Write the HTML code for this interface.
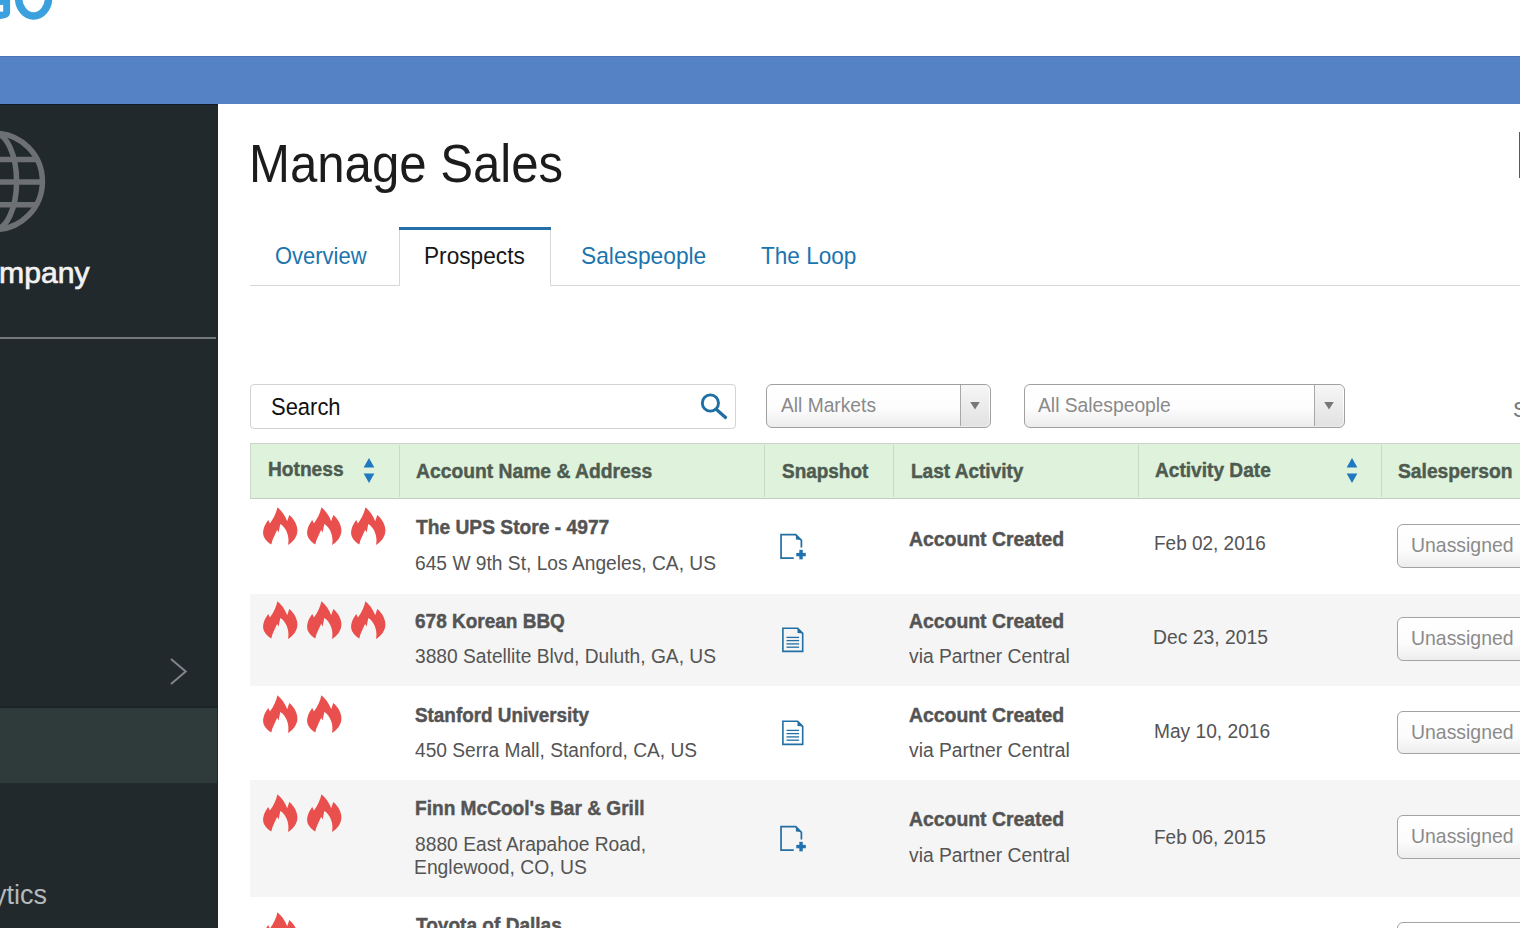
<!DOCTYPE html>
<html><head><meta charset="utf-8"><title>Manage Sales</title>
<style>
html,body{margin:0;padding:0;}
body{width:1520px;height:928px;overflow:hidden;position:relative;background:#fff;font-family:"Liberation Sans", sans-serif;}
</style></head><body>
<svg style="position:absolute;left:0px;top:0px;overflow:visible;" width="60" height="25" viewBox="0 0 60 25"><path d="M-2,0 H10.1 V13 Q9.6,16.5 6,17.8 Q3,18.8 -2,19.2 Z" fill="#3aa0de"/><rect x="-2" y="4.9" width="5.2" height="6.7" fill="#fff"/><ellipse cx="33.6" cy="-2.2" rx="15" ry="18.2" fill="none" stroke="#3aa0de" stroke-width="7.5"/></svg>
<div style="position:absolute;left:0px;top:56px;width:1520px;height:48px;background:#5581c5;"></div>
<div style="position:absolute;left:0px;top:56px;width:1520px;height:1px;background:#4d74b4;"></div>
<div style="position:absolute;left:0px;top:104px;width:217.7px;height:824px;background:#22292d;"></div>
<div style="position:absolute;left:0px;top:104px;width:217.7px;height:1.3px;background:#0f1c2c;"></div>
<svg style="position:absolute;left:0px;top:104px;overflow:visible;" width="218" height="200" viewBox="0 0 218 200"><defs><clipPath id="gc"><circle cx="-5.8" cy="77.4" r="50"/></clipPath></defs><g fill="none" stroke="#6e7173" stroke-width="5.5"><circle cx="-5.8" cy="77.4" r="48.2"/><g clip-path="url(#gc)"><ellipse cx="-5.8" cy="77.4" rx="22.4" ry="48.2"/><line x1="-60" y1="55.5" x2="60" y2="55.5"/><line x1="-60" y1="78" x2="60" y2="78"/><line x1="-60" y1="100.7" x2="60" y2="100.7"/></g></g></svg>
<div style="position:absolute;right:1430.40px;top:258.00px;font-size:30.2px;line-height:30.2px;font-weight:normal;color:#f2f2f2;letter-spacing:0px;white-space:nowrap;-webkit-text-stroke:0.7px #f2f2f2;">Company</div>
<div style="position:absolute;left:0px;top:336.5px;width:216px;height:2px;background:#747a7c;"></div>
<svg style="position:absolute;left:160px;top:650px;overflow:visible;" width="40" height="45" viewBox="0 0 40 45"><polyline points="11,9 25.7,21.5 11,34" fill="none" stroke="#80868a" stroke-width="2"/></svg>
<div style="position:absolute;left:0px;top:705.6px;width:217.7px;height:2.4px;background:#1c2427;"></div>
<div style="position:absolute;left:0px;top:708px;width:216.6px;height:74.5px;background:#2f3a3b;"></div>
<div style="position:absolute;right:1473.10px;top:882.00px;font-size:27px;line-height:27px;font-weight:normal;color:#b4b8bb;letter-spacing:0px;white-space:nowrap;">Analytics</div>
<div style="position:absolute;left:248.96px;top:136.00px;font-size:54px;line-height:54px;font-weight:normal;color:#1c1c1c;letter-spacing:0px;white-space:nowrap;transform:scaleX(0.9100);transform-origin:left top;">Manage Sales</div>
<div style="position:absolute;left:250px;top:284.6px;width:1270px;height:1.6px;background:#d6d6d6;"></div>
<div style="position:absolute;left:398.6px;top:227.2px;width:152.2px;height:59.2px;background:#fff;border-left:1px solid #d8d8d8;border-right:1px solid #d8d8d8;box-sizing:border-box;"></div>
<div style="position:absolute;left:398.6px;top:227.2px;width:152.2px;height:3px;background:#246fa8;"></div>
<div style="position:absolute;left:274.70px;top:244.00px;font-size:23.8px;line-height:23.8px;font-weight:normal;color:#1b74ae;letter-spacing:0px;white-space:nowrap;transform:scaleX(0.9230);transform-origin:left top;">Overview</div>
<div style="position:absolute;left:424.25px;top:244.00px;font-size:23.8px;line-height:23.8px;font-weight:normal;color:#161616;letter-spacing:0px;white-space:nowrap;transform:scaleX(0.9524);transform-origin:left top;">Prospects</div>
<div style="position:absolute;left:580.74px;top:244.00px;font-size:23.8px;line-height:23.8px;font-weight:normal;color:#1b74ae;letter-spacing:0px;white-space:nowrap;transform:scaleX(0.9562);transform-origin:left top;">Salespeople</div>
<div style="position:absolute;left:761.00px;top:244.00px;font-size:23.8px;line-height:23.8px;font-weight:normal;color:#1b74ae;letter-spacing:0px;white-space:nowrap;transform:scaleX(0.9480);transform-origin:left top;">The Loop</div>
<div style="position:absolute;left:1519px;top:132px;width:1px;height:46px;background:#2b6e78;"></div>
<div style="position:absolute;left:250.3px;top:383.8px;width:485.3px;height:45.5px;border:1.5px solid #d3d3d3;border-radius:4px;box-sizing:border-box;background:#fff;"></div>
<div style="position:absolute;left:270.70px;top:395.00px;font-size:24.3px;line-height:24.3px;font-weight:normal;color:#111;letter-spacing:0px;white-space:nowrap;transform:scaleX(0.9039);transform-origin:left top;">Search</div>
<svg style="position:absolute;left:695px;top:388px;overflow:visible;" width="40" height="40" viewBox="0 0 40 40"><circle cx="15.4" cy="15" r="8.1" fill="none" stroke="#1f6fa3" stroke-width="2.9"/><line x1="21.5" y1="21.5" x2="30.5" y2="29.5" stroke="#1f6fa3" stroke-width="3.2" stroke-linecap="round"/></svg>
<div style="position:absolute;left:766px;top:383.7px;width:224.60000000000002px;height:44.1px;border:1.5px solid #a0a0a0;border-radius:6px;box-sizing:border-box;background:linear-gradient(#ffffff 0%,#fdfdfd 55%,#ececec 100%);"></div>
<div style="position:absolute;left:959.8px;top:385.2px;width:29.300000000000068px;height:41.2px;background:linear-gradient(#f6f6f6,#e2e2e2);border-radius:0 5px 5px 0;"></div>
<div style="position:absolute;left:959.8px;top:385.2px;width:1.2px;height:41.2px;background:#a8a8a8;"></div>
<svg style="position:absolute;left:969.2px;top:400px;overflow:visible;" width="12" height="12" viewBox="0 0 12 12"><polygon points="1.25,2 10.75,2 6,9.4" fill="#777"/></svg>
<div style="position:absolute;left:780.50px;top:396.00px;font-size:19.9px;line-height:19.9px;font-weight:normal;color:#8a8a8a;letter-spacing:0px;white-space:nowrap;transform:scaleX(0.9657);transform-origin:left top;">All Markets</div>
<div style="position:absolute;left:1023.9px;top:383.7px;width:320.9px;height:44.1px;border:1.5px solid #a0a0a0;border-radius:6px;box-sizing:border-box;background:linear-gradient(#ffffff 0%,#fdfdfd 55%,#ececec 100%);"></div>
<div style="position:absolute;left:1313.6px;top:385.2px;width:29.700000000000045px;height:41.2px;background:linear-gradient(#f6f6f6,#e2e2e2);border-radius:0 5px 5px 0;"></div>
<div style="position:absolute;left:1313.6px;top:385.2px;width:1.2px;height:41.2px;background:#a8a8a8;"></div>
<svg style="position:absolute;left:1323.1999999999998px;top:400px;overflow:visible;" width="12" height="12" viewBox="0 0 12 12"><polygon points="1.25,2 10.75,2 6,9.4" fill="#777"/></svg>
<div style="position:absolute;left:1037.60px;top:396.00px;font-size:19.9px;line-height:19.9px;font-weight:normal;color:#8a8a8a;letter-spacing:0px;white-space:nowrap;transform:scaleX(0.9686);transform-origin:left top;">All Salespeople</div>
<div style="position:absolute;left:1513.00px;top:399.00px;font-size:21.8px;line-height:21.8px;font-weight:normal;color:#777;letter-spacing:0px;white-space:nowrap;">Show</div>
<div style="position:absolute;left:250.4px;top:443.3px;width:1270px;height:55.6px;background:#dff2dc;border-top:1.5px solid #cdd3cb;border-bottom:1.6px solid #c6ccc4;border-left:1.5px solid #cdd6cb;box-sizing:border-box;"></div>
<div style="position:absolute;left:398.6px;top:445px;width:1.2px;height:52px;background:#cbdac8;"></div>
<div style="position:absolute;left:763.6px;top:445px;width:1.2px;height:52px;background:#cbdac8;"></div>
<div style="position:absolute;left:892.8px;top:445px;width:1.2px;height:52px;background:#cbdac8;"></div>
<div style="position:absolute;left:1138.2px;top:445px;width:1.2px;height:52px;background:#cbdac8;"></div>
<div style="position:absolute;left:1381.2px;top:445px;width:1.2px;height:52px;background:#cbdac8;"></div>
<div style="position:absolute;left:268.40px;top:459.00px;font-size:20.6px;line-height:20.6px;font-weight:bold;color:#4e5b50;letter-spacing:0px;white-space:nowrap;transform:scaleX(0.9296);transform-origin:left top;-webkit-text-stroke:0.45px #4e5b50;">Hotness</div>
<div style="position:absolute;left:415.70px;top:461.00px;font-size:20.6px;line-height:20.6px;font-weight:bold;color:#4e5b50;letter-spacing:0px;white-space:nowrap;transform:scaleX(0.9369);transform-origin:left top;-webkit-text-stroke:0.45px #4e5b50;">Account Name &amp; Address</div>
<div style="position:absolute;left:781.60px;top:461.00px;font-size:20.6px;line-height:20.6px;font-weight:bold;color:#4e5b50;letter-spacing:0px;white-space:nowrap;transform:scaleX(0.9200);transform-origin:left top;-webkit-text-stroke:0.45px #4e5b50;">Snapshot</div>
<div style="position:absolute;left:911.00px;top:461.00px;font-size:20.6px;line-height:20.6px;font-weight:bold;color:#4e5b50;letter-spacing:0px;white-space:nowrap;transform:scaleX(0.9238);transform-origin:left top;-webkit-text-stroke:0.45px #4e5b50;">Last Activity</div>
<div style="position:absolute;left:1155.10px;top:460.00px;font-size:20.6px;line-height:20.6px;font-weight:bold;color:#4e5b50;letter-spacing:0px;white-space:nowrap;transform:scaleX(0.9280);transform-origin:left top;-webkit-text-stroke:0.45px #4e5b50;">Activity Date</div>
<div style="position:absolute;left:1398.20px;top:461.00px;font-size:20.6px;line-height:20.6px;font-weight:bold;color:#4e5b50;letter-spacing:0px;white-space:nowrap;transform:scaleX(0.9352);transform-origin:left top;-webkit-text-stroke:0.45px #4e5b50;">Salesperson</div>
<svg style="position:absolute;left:363.1px;top:456px;overflow:visible;" width="12" height="30" viewBox="0 0 12 30"><polygon points="0.65,11.6 11.35,11.6 6,2.1" fill="#1f78c1"/><polygon points="0.65,17.5 11.35,17.5 6,27" fill="#1f78c1"/></svg>
<svg style="position:absolute;left:1346px;top:456px;overflow:visible;" width="12" height="30" viewBox="0 0 12 30"><polygon points="0.65,11.6 11.35,11.6 6,2.1" fill="#1f78c1"/><polygon points="0.65,17.5 11.35,17.5 6,27" fill="#1f78c1"/></svg>
<div style="position:absolute;left:250px;top:499.5px;width:1270px;height:94.29999999999995px;background:#fff;"></div>
<div style="position:absolute;left:250px;top:593.8px;width:1270px;height:92.40000000000009px;background:#f5f5f5;"></div>
<div style="position:absolute;left:250px;top:686.2px;width:1270px;height:93.69999999999993px;background:#fff;"></div>
<div style="position:absolute;left:250px;top:779.9px;width:1270px;height:117.60000000000002px;background:#f5f5f5;"></div>
<div style="position:absolute;left:250px;top:897.5px;width:1270px;height:30.5px;background:#fff;"></div>
<svg style="position:absolute;left:258.0px;top:501.90000000000003px;overflow:visible;" width="44" height="48" viewBox="0 0 44 48"><path d="M19.4,5.2 C22.8,8 26.8,12.5 29.2,19.3 L31.3,12.9 C36.2,17 39.6,23 39.4,29 C39.1,35 35,40 30,43 C31.8,35 28.5,25.5 22.3,21.9 L20.6,30.6 L19.2,27.8 C17,33 14.2,37.5 13.3,42.6 C9,39.6 5.1,36 5.1,31 C5.1,26 7.8,21 10.3,17.9 L11.9,21.6 C15.5,16.5 18.5,10.5 19.4,5.2 Z" fill="#e94f4d"/></svg>
<svg style="position:absolute;left:301.5px;top:501.90000000000003px;overflow:visible;" width="44" height="48" viewBox="0 0 44 48"><path d="M19.4,5.2 C22.8,8 26.8,12.5 29.2,19.3 L31.3,12.9 C36.2,17 39.6,23 39.4,29 C39.1,35 35,40 30,43 C31.8,35 28.5,25.5 22.3,21.9 L20.6,30.6 L19.2,27.8 C17,33 14.2,37.5 13.3,42.6 C9,39.6 5.1,36 5.1,31 C5.1,26 7.8,21 10.3,17.9 L11.9,21.6 C15.5,16.5 18.5,10.5 19.4,5.2 Z" fill="#e94f4d"/></svg>
<svg style="position:absolute;left:346.3px;top:501.90000000000003px;overflow:visible;" width="44" height="48" viewBox="0 0 44 48"><path d="M19.4,5.2 C22.8,8 26.8,12.5 29.2,19.3 L31.3,12.9 C36.2,17 39.6,23 39.4,29 C39.1,35 35,40 30,43 C31.8,35 28.5,25.5 22.3,21.9 L20.6,30.6 L19.2,27.8 C17,33 14.2,37.5 13.3,42.6 C9,39.6 5.1,36 5.1,31 C5.1,26 7.8,21 10.3,17.9 L11.9,21.6 C15.5,16.5 18.5,10.5 19.4,5.2 Z" fill="#e94f4d"/></svg>
<svg style="position:absolute;left:258.0px;top:595.8px;overflow:visible;" width="44" height="48" viewBox="0 0 44 48"><path d="M19.4,5.2 C22.8,8 26.8,12.5 29.2,19.3 L31.3,12.9 C36.2,17 39.6,23 39.4,29 C39.1,35 35,40 30,43 C31.8,35 28.5,25.5 22.3,21.9 L20.6,30.6 L19.2,27.8 C17,33 14.2,37.5 13.3,42.6 C9,39.6 5.1,36 5.1,31 C5.1,26 7.8,21 10.3,17.9 L11.9,21.6 C15.5,16.5 18.5,10.5 19.4,5.2 Z" fill="#e94f4d"/></svg>
<svg style="position:absolute;left:301.5px;top:595.8px;overflow:visible;" width="44" height="48" viewBox="0 0 44 48"><path d="M19.4,5.2 C22.8,8 26.8,12.5 29.2,19.3 L31.3,12.9 C36.2,17 39.6,23 39.4,29 C39.1,35 35,40 30,43 C31.8,35 28.5,25.5 22.3,21.9 L20.6,30.6 L19.2,27.8 C17,33 14.2,37.5 13.3,42.6 C9,39.6 5.1,36 5.1,31 C5.1,26 7.8,21 10.3,17.9 L11.9,21.6 C15.5,16.5 18.5,10.5 19.4,5.2 Z" fill="#e94f4d"/></svg>
<svg style="position:absolute;left:346.3px;top:595.8px;overflow:visible;" width="44" height="48" viewBox="0 0 44 48"><path d="M19.4,5.2 C22.8,8 26.8,12.5 29.2,19.3 L31.3,12.9 C36.2,17 39.6,23 39.4,29 C39.1,35 35,40 30,43 C31.8,35 28.5,25.5 22.3,21.9 L20.6,30.6 L19.2,27.8 C17,33 14.2,37.5 13.3,42.6 C9,39.6 5.1,36 5.1,31 C5.1,26 7.8,21 10.3,17.9 L11.9,21.6 C15.5,16.5 18.5,10.5 19.4,5.2 Z" fill="#e94f4d"/></svg>
<svg style="position:absolute;left:258.0px;top:689.5px;overflow:visible;" width="44" height="48" viewBox="0 0 44 48"><path d="M19.4,5.2 C22.8,8 26.8,12.5 29.2,19.3 L31.3,12.9 C36.2,17 39.6,23 39.4,29 C39.1,35 35,40 30,43 C31.8,35 28.5,25.5 22.3,21.9 L20.6,30.6 L19.2,27.8 C17,33 14.2,37.5 13.3,42.6 C9,39.6 5.1,36 5.1,31 C5.1,26 7.8,21 10.3,17.9 L11.9,21.6 C15.5,16.5 18.5,10.5 19.4,5.2 Z" fill="#e94f4d"/></svg>
<svg style="position:absolute;left:301.5px;top:689.5px;overflow:visible;" width="44" height="48" viewBox="0 0 44 48"><path d="M19.4,5.2 C22.8,8 26.8,12.5 29.2,19.3 L31.3,12.9 C36.2,17 39.6,23 39.4,29 C39.1,35 35,40 30,43 C31.8,35 28.5,25.5 22.3,21.9 L20.6,30.6 L19.2,27.8 C17,33 14.2,37.5 13.3,42.6 C9,39.6 5.1,36 5.1,31 C5.1,26 7.8,21 10.3,17.9 L11.9,21.6 C15.5,16.5 18.5,10.5 19.4,5.2 Z" fill="#e94f4d"/></svg>
<svg style="position:absolute;left:258.0px;top:789.3px;overflow:visible;" width="44" height="48" viewBox="0 0 44 48"><path d="M19.4,5.2 C22.8,8 26.8,12.5 29.2,19.3 L31.3,12.9 C36.2,17 39.6,23 39.4,29 C39.1,35 35,40 30,43 C31.8,35 28.5,25.5 22.3,21.9 L20.6,30.6 L19.2,27.8 C17,33 14.2,37.5 13.3,42.6 C9,39.6 5.1,36 5.1,31 C5.1,26 7.8,21 10.3,17.9 L11.9,21.6 C15.5,16.5 18.5,10.5 19.4,5.2 Z" fill="#e94f4d"/></svg>
<svg style="position:absolute;left:301.5px;top:789.3px;overflow:visible;" width="44" height="48" viewBox="0 0 44 48"><path d="M19.4,5.2 C22.8,8 26.8,12.5 29.2,19.3 L31.3,12.9 C36.2,17 39.6,23 39.4,29 C39.1,35 35,40 30,43 C31.8,35 28.5,25.5 22.3,21.9 L20.6,30.6 L19.2,27.8 C17,33 14.2,37.5 13.3,42.6 C9,39.6 5.1,36 5.1,31 C5.1,26 7.8,21 10.3,17.9 L11.9,21.6 C15.5,16.5 18.5,10.5 19.4,5.2 Z" fill="#e94f4d"/></svg>
<svg style="position:absolute;left:258.0px;top:907.1999999999999px;overflow:visible;" width="44" height="48" viewBox="0 0 44 48"><path d="M19.4,5.2 C22.8,8 26.8,12.5 29.2,19.3 L31.3,12.9 C36.2,17 39.6,23 39.4,29 C39.1,35 35,40 30,43 C31.8,35 28.5,25.5 22.3,21.9 L20.6,30.6 L19.2,27.8 C17,33 14.2,37.5 13.3,42.6 C9,39.6 5.1,36 5.1,31 C5.1,26 7.8,21 10.3,17.9 L11.9,21.6 C15.5,16.5 18.5,10.5 19.4,5.2 Z" fill="#e94f4d"/></svg>
<div style="position:absolute;left:416.06px;top:517.00px;font-size:20.1px;line-height:20.1px;font-weight:bold;color:#545454;letter-spacing:0px;white-space:nowrap;transform:scaleX(0.9562);transform-origin:left top;-webkit-text-stroke:0.45px #545454;">The UPS Store - 4977</div>
<div style="position:absolute;left:415.10px;top:553.00px;font-size:20.0px;line-height:20.0px;font-weight:normal;color:#545454;letter-spacing:0px;white-space:nowrap;transform:scaleX(0.9602);transform-origin:left top;">645 W 9th St, Los Angeles, CA, US</div>
<div style="position:absolute;left:415.10px;top:611.00px;font-size:20.1px;line-height:20.1px;font-weight:bold;color:#545454;letter-spacing:0px;white-space:nowrap;transform:scaleX(0.9453);transform-origin:left top;-webkit-text-stroke:0.45px #545454;">678 Korean BBQ</div>
<div style="position:absolute;left:415.10px;top:646.00px;font-size:20.0px;line-height:20.0px;font-weight:normal;color:#545454;letter-spacing:0px;white-space:nowrap;transform:scaleX(0.9602);transform-origin:left top;">3880 Satellite Blvd, Duluth, GA, US</div>
<div style="position:absolute;left:415.10px;top:705.00px;font-size:20.1px;line-height:20.1px;font-weight:bold;color:#545454;letter-spacing:0px;white-space:nowrap;transform:scaleX(0.9392);transform-origin:left top;-webkit-text-stroke:0.45px #545454;">Stanford University</div>
<div style="position:absolute;left:415.10px;top:740.00px;font-size:20.0px;line-height:20.0px;font-weight:normal;color:#545454;letter-spacing:0px;white-space:nowrap;transform:scaleX(0.9576);transform-origin:left top;">450 Serra Mall, Stanford, CA, US</div>
<div style="position:absolute;left:415.10px;top:798.00px;font-size:20.1px;line-height:20.1px;font-weight:bold;color:#545454;letter-spacing:0px;white-space:nowrap;transform:scaleX(0.9506);transform-origin:left top;-webkit-text-stroke:0.45px #545454;">Finn McCool's Bar &amp; Grill</div>
<div style="position:absolute;left:415.10px;top:834.00px;font-size:20.0px;line-height:20.0px;font-weight:normal;color:#545454;letter-spacing:0px;white-space:nowrap;transform:scaleX(0.9619);transform-origin:left top;">8880 East Arapahoe Road,</div>
<div style="position:absolute;left:414.13px;top:857.00px;font-size:20.0px;line-height:20.0px;font-weight:normal;color:#545454;letter-spacing:0px;white-space:nowrap;transform:scaleX(0.9657);transform-origin:left top;">Englewood, CO, US</div>
<div style="position:absolute;left:415.75px;top:915.00px;font-size:20.1px;line-height:20.1px;font-weight:bold;color:#545454;letter-spacing:0px;white-space:nowrap;transform:scaleX(0.9484);transform-origin:left top;-webkit-text-stroke:0.45px #545454;">Toyota of Dallas</div>
<svg style="position:absolute;left:770px;top:525px;overflow:visible;" width="50" height="45" viewBox="0 0 50 45"><path d="M23.76,33.1 H11.05 V9.58 H25.7 L31.4,15.3 V22.55" fill="none" stroke="#236ea3" stroke-width="1.7" stroke-linejoin="miter"/><polygon points="25.9,9.4 31.6,15.1 25.9,14.6" fill="#236ea3"/><rect x="26.29" y="27.88" width="9.5" height="3.4" fill="#1f72ad"/><rect x="29.34" y="24.83" width="3.4" height="9.5" fill="#1f72ad"/></svg>
<svg style="position:absolute;left:770px;top:618px;overflow:visible;" width="50" height="45" viewBox="0 0 50 45"><path d="M12.9,10.3 H27.6 L32.7,15.4 V33.4 H12.9 Z" fill="none" stroke="#236ea3" stroke-width="1.6"/><polygon points="27.5,9.8 33.3,15.6 27.5,15" fill="#236ea3"/><g stroke="#236ea3" stroke-width="1.3"><line x1="16.5" y1="19.4" x2="29.1" y2="19.4"/><line x1="16.5" y1="22.6" x2="29.1" y2="22.6"/><line x1="16.5" y1="25.9" x2="29.1" y2="25.9"/><line x1="16.5" y1="29.2" x2="29.1" y2="29.2"/></g></svg>
<svg style="position:absolute;left:769.6px;top:711.2px;overflow:visible;" width="50" height="45" viewBox="0 0 50 45"><path d="M12.9,10.3 H27.6 L32.7,15.4 V33.4 H12.9 Z" fill="none" stroke="#236ea3" stroke-width="1.6"/><polygon points="27.5,9.8 33.3,15.6 27.5,15" fill="#236ea3"/><g stroke="#236ea3" stroke-width="1.3"><line x1="16.5" y1="19.4" x2="29.1" y2="19.4"/><line x1="16.5" y1="22.6" x2="29.1" y2="22.6"/><line x1="16.5" y1="25.9" x2="29.1" y2="25.9"/><line x1="16.5" y1="29.2" x2="29.1" y2="29.2"/></g></svg>
<svg style="position:absolute;left:770px;top:816.5px;overflow:visible;" width="50" height="45" viewBox="0 0 50 45"><path d="M23.76,33.1 H11.05 V9.58 H25.7 L31.4,15.3 V22.55" fill="none" stroke="#236ea3" stroke-width="1.7" stroke-linejoin="miter"/><polygon points="25.9,9.4 31.6,15.1 25.9,14.6" fill="#236ea3"/><rect x="26.29" y="27.88" width="9.5" height="3.4" fill="#1f72ad"/><rect x="29.34" y="24.83" width="3.4" height="9.5" fill="#1f72ad"/></svg>
<div style="position:absolute;left:908.70px;top:529.00px;font-size:20.1px;line-height:20.1px;font-weight:bold;color:#545454;letter-spacing:0px;white-space:nowrap;transform:scaleX(0.9646);transform-origin:left top;-webkit-text-stroke:0.45px #545454;">Account Created</div>
<div style="position:absolute;left:908.70px;top:611.00px;font-size:20.1px;line-height:20.1px;font-weight:bold;color:#545454;letter-spacing:0px;white-space:nowrap;transform:scaleX(0.9646);transform-origin:left top;-webkit-text-stroke:0.45px #545454;">Account Created</div>
<div style="position:absolute;left:908.70px;top:646.00px;font-size:20.0px;line-height:20.0px;font-weight:normal;color:#545454;letter-spacing:0px;white-space:nowrap;transform:scaleX(0.9639);transform-origin:left top;">via Partner Central</div>
<div style="position:absolute;left:908.70px;top:705.00px;font-size:20.1px;line-height:20.1px;font-weight:bold;color:#545454;letter-spacing:0px;white-space:nowrap;transform:scaleX(0.9646);transform-origin:left top;-webkit-text-stroke:0.45px #545454;">Account Created</div>
<div style="position:absolute;left:908.70px;top:740.00px;font-size:20.0px;line-height:20.0px;font-weight:normal;color:#545454;letter-spacing:0px;white-space:nowrap;transform:scaleX(0.9639);transform-origin:left top;">via Partner Central</div>
<div style="position:absolute;left:908.70px;top:809.00px;font-size:20.1px;line-height:20.1px;font-weight:bold;color:#545454;letter-spacing:0px;white-space:nowrap;transform:scaleX(0.9646);transform-origin:left top;-webkit-text-stroke:0.45px #545454;">Account Created</div>
<div style="position:absolute;left:908.70px;top:845.00px;font-size:20.0px;line-height:20.0px;font-weight:normal;color:#545454;letter-spacing:0px;white-space:nowrap;transform:scaleX(0.9639);transform-origin:left top;">via Partner Central</div>
<div style="position:absolute;left:1154.05px;top:533.00px;font-size:20.0px;line-height:20.0px;font-weight:normal;color:#545454;letter-spacing:0px;white-space:nowrap;transform:scaleX(0.9487);transform-origin:left top;">Feb 02, 2016</div>
<div style="position:absolute;left:1153.23px;top:627.00px;font-size:20.0px;line-height:20.0px;font-weight:normal;color:#545454;letter-spacing:0px;white-space:nowrap;transform:scaleX(0.9661);transform-origin:left top;">Dec 23, 2015</div>
<div style="position:absolute;left:1154.04px;top:721.00px;font-size:20.0px;line-height:20.0px;font-weight:normal;color:#545454;letter-spacing:0px;white-space:nowrap;transform:scaleX(0.9583);transform-origin:left top;">May 10, 2016</div>
<div style="position:absolute;left:1154.05px;top:827.00px;font-size:20.0px;line-height:20.0px;font-weight:normal;color:#545454;letter-spacing:0px;white-space:nowrap;transform:scaleX(0.9487);transform-origin:left top;">Feb 06, 2015</div>
<div style="position:absolute;left:1397.3px;top:524.1px;width:160px;height:43.8px;border:1.5px solid #a3a3a3;border-radius:6px;box-sizing:border-box;background:linear-gradient(#ffffff 0%,#fcfcfc 60%,#ededed 100%);"></div>
<div style="position:absolute;left:1411.06px;top:535.00px;font-size:20.6px;line-height:20.6px;font-weight:normal;color:#8b8b8b;letter-spacing:0px;white-space:nowrap;transform:scaleX(0.9430);transform-origin:left top;">Unassigned</div>
<div style="position:absolute;left:1397.3px;top:617.2px;width:160px;height:43.8px;border:1.5px solid #a3a3a3;border-radius:6px;box-sizing:border-box;background:linear-gradient(#ffffff 0%,#fcfcfc 60%,#ededed 100%);"></div>
<div style="position:absolute;left:1411.06px;top:628.00px;font-size:20.6px;line-height:20.6px;font-weight:normal;color:#8b8b8b;letter-spacing:0px;white-space:nowrap;transform:scaleX(0.9430);transform-origin:left top;">Unassigned</div>
<div style="position:absolute;left:1397.3px;top:710.6px;width:160px;height:43.8px;border:1.5px solid #a3a3a3;border-radius:6px;box-sizing:border-box;background:linear-gradient(#ffffff 0%,#fcfcfc 60%,#ededed 100%);"></div>
<div style="position:absolute;left:1411.06px;top:722.00px;font-size:20.6px;line-height:20.6px;font-weight:normal;color:#8b8b8b;letter-spacing:0px;white-space:nowrap;transform:scaleX(0.9430);transform-origin:left top;">Unassigned</div>
<div style="position:absolute;left:1397.3px;top:815.1px;width:160px;height:43.8px;border:1.5px solid #a3a3a3;border-radius:6px;box-sizing:border-box;background:linear-gradient(#ffffff 0%,#fcfcfc 60%,#ededed 100%);"></div>
<div style="position:absolute;left:1411.06px;top:826.00px;font-size:20.6px;line-height:20.6px;font-weight:normal;color:#8b8b8b;letter-spacing:0px;white-space:nowrap;transform:scaleX(0.9430);transform-origin:left top;">Unassigned</div>
<div style="position:absolute;left:1397.3px;top:921.7px;width:160px;height:43.8px;border:1.5px solid #a3a3a3;border-radius:6px;box-sizing:border-box;background:linear-gradient(#ffffff 0%,#fcfcfc 60%,#ededed 100%);"></div>
<div style="position:absolute;left:1411.06px;top:933.00px;font-size:20.6px;line-height:20.6px;font-weight:normal;color:#8b8b8b;letter-spacing:0px;white-space:nowrap;transform:scaleX(0.9430);transform-origin:left top;">Unassigned</div>
</body></html>
